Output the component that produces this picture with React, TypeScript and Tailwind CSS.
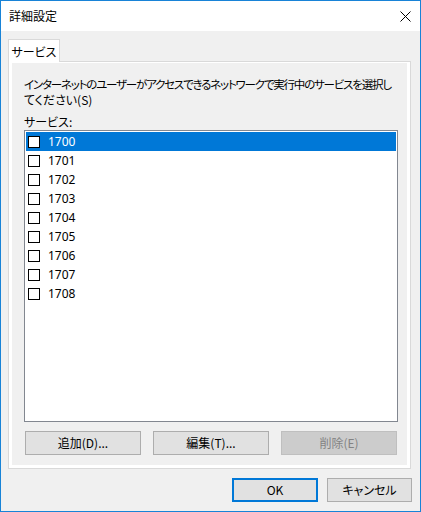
import React from "react";

const font = { fontFamily: '"Noto Sans CJK JP", "Noto Sans", sans-serif' };

function Btn({ children, w = "w-[116px]", disabled = false, primary = false }: { children: React.ReactNode; w?: string; disabled?: boolean; primary?: boolean }) {
  const base = "h-[24px] flex items-center justify-center text-[12px] leading-none [font-feature-settings:'palt']";
  if (disabled) return <div className={`${base} ${w} bg-[#cccccc] border border-[#bfbfbf] text-[#838383]`}>{children}</div>;
  if (primary) return <div className={`${base} ${w} bg-[#e1e1e1] border-2 border-[#0078d7] text-black`}>{children}</div>;
  return <div className={`${base} ${w} bg-[#e1e1e1] border border-[#adadad] text-black`}>{children}</div>;
}

export default function App() {
  const items = ["1700", "1701", "1702", "1703", "1704", "1705", "1706", "1707", "1708"];
  return (
    <div style={font} className="w-[421px] h-[512px] border border-[#1883d7] flex flex-col bg-[#f0f0f0] text-black">
      <div className="h-[30px] bg-white flex items-center justify-between pl-[8px] pr-[9px] shrink-0">
        <span className="text-[12px] leading-none [font-feature-settings:'palt']">詳細設定</span>
        <svg width="11" height="11" viewBox="0 0 11 11">
          <path d="M0.5 0.5 L10.5 10.5 M10.5 0.5 L0.5 10.5" stroke="#000" strokeWidth="1" fill="none" />
        </svg>
      </div>
      <div className="flex-1 flex flex-col px-[7px] pt-[8px]">
        <div className="flex">
          <div className="relative z-10 -mb-px w-[52px] h-[23px] bg-white border border-b-0 border-[#d9d9d9] flex items-center justify-center text-[12px] leading-none pt-[1px] [font-feature-settings:'palt']">
            サービス
          </div>
        </div>
        <div className="w-[403px] h-[408px] border border-[#d9d9d9] bg-white px-[3px] pt-[1px] pb-[3px] flex">
          <div className="flex-1 min-w-0 bg-[#f0f0f0] flex flex-col pl-[12px] pr-[9px] pt-[14px]">
            <div className="text-[12px] leading-[15px] whitespace-nowrap [font-feature-settings:'palt']">
              <div className="text-[11.5px] tracking-[-1.2px]">インターネットのユーザーがアクセスできるネットワークで実行中のサービスを選択し</div>
              <div>てください(S)</div>
            </div>
            <div className="text-[12px] leading-[15px] mt-[7px] [font-feature-settings:'palt']">サービス:</div>
            <div className="mt-[1px] h-[292px] border border-[#828790] bg-white p-px flex flex-col">
              {items.map((it, i) => (
                <div
                  key={it}
                  className={`h-[19px] flex items-center pl-[2px] shrink-0 ${i === 0 ? "bg-[#0078d7] text-white" : "text-black"}`}
                >
                  <div className="w-[12px] h-[12px] border border-black bg-white shrink-0" />
                  <span className="ml-[8px] text-[12px] leading-none" style={{ fontFamily: '"Noto Sans", sans-serif' }}>{it}</span>
                </div>
              ))}
            </div>
            <div className="mt-[9px] flex gap-[12px] px-[1px]">
              <Btn>追加(D)...</Btn>
              <Btn>編集(T)...</Btn>
              <Btn disabled>削除(E)</Btn>
            </div>
          </div>
        </div>
        <div className="flex justify-end gap-[9px] mt-[9px] pr-[1px]">
          <Btn w="w-[86px]" primary>OK</Btn>
          <Btn w="w-[85px]">キャンセル</Btn>
        </div>
      </div>
    </div>
  );
}
